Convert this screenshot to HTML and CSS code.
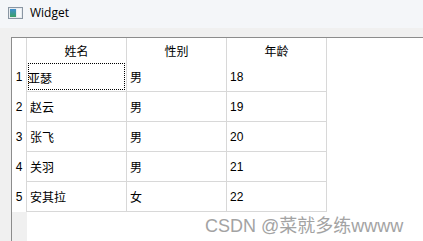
FILE: index.html
```html
<!DOCTYPE html>
<html lang="zh-CN">
<head>
  <meta charset="UTF-8">
  <title>Widget</title>
  <link rel="stylesheet" href="styles.css">
</head>
<body>
  <div class="window">
    <div class="titlebar">
      <svg class="app-icon" width="15" height="12" viewBox="0 0 15 12">
        <defs>
          <linearGradient id="ig" x1="0" y1="0" x2="0" y2="1">
            <stop offset="0" stop-color="#3f8fd0"/>
            <stop offset="1" stop-color="#3aa066"/>
          </linearGradient>
        </defs>
        <rect x="0.5" y="0.5" width="14" height="11" fill="#e8ecf0" stroke="#8a96a3"/>
        <rect x="2" y="2" width="6" height="8" fill="url(#ig)"/>
        <rect x="9" y="2" width="4" height="8" fill="#f7f9fb"/>
      </svg>
      <span class="title">Widget</span>
    </div>
    <div class="client">
      <div class="view">
        <div class="vhead">
          <div class="corner"></div>
          <div class="rownum">1</div>
          <div class="rownum">2</div>
          <div class="rownum">3</div>
          <div class="rownum">4</div>
          <div class="rownum">5</div>
        </div>
        <table class="grid">
          <thead>
            <tr><th>姓名</th><th>性别</th><th>年龄</th></tr>
          </thead>
          <tbody>
            <tr><td><span class="focus">亚瑟</span></td><td>男</td><td>18</td></tr>
            <tr><td>赵云</td><td>男</td><td>19</td></tr>
            <tr><td>张飞</td><td>男</td><td>20</td></tr>
            <tr><td>关羽</td><td>男</td><td>21</td></tr>
            <tr><td>安其拉</td><td>女</td><td>22</td></tr>
          </tbody>
        </table>
        <div class="mark">CSDN @菜就多练wwww</div>
      </div>
    </div>
  </div>
</body>
</html>
```

FILE: styles.css
```css
html, body { margin: 0; height: 100%; }
body {
  font-family: "Noto Sans CJK SC", "Noto Sans", sans-serif;
  font-size: 12px;
  color: #000;
  background: #f0f0f0;
}
.window { display: flex; flex-direction: column; height: 241px; overflow: hidden; }

.titlebar {
  height: 28px;
  display: flex;
  align-items: center;
  padding-left: 8px;
  background: #f4f6f9;
  flex: none;
}
.app-icon { margin-right: 7px; margin-top: -2px; }
.title { font-family: "Open Sans", "Noto Sans", sans-serif; font-size: 12px; margin-top: -3px; }

.client { flex: 1; padding: 9px 0 0 11px; }
.view {
  position: relative;
  height: 100%;
  display: flex;
  align-items: flex-start;
  border-left: 1px solid #8c8c8c;
  border-top: 1px solid #8c8c8c;
  background: #fff;
  box-sizing: border-box;
}

.vhead {
  width: 15px;
  align-self: stretch;
  background: #f0f0f0;
  flex: none;
}
.corner { height: 24px; background: #fff; border-right: 1px solid #d8d8d8; }
.rownum {
  height: 30px;
  line-height: 30px;
  text-align: center;
  background: #fff;
  border-right: 1px solid #d8d8d8;
  font-family: "Liberation Sans", sans-serif;
  font-size: 12px;
}

.grid { border-collapse: collapse; table-layout: fixed; }
.grid th, .grid td {
  width: 99px;
  padding: 0;
  border-right: 1px solid #d8d8d8;
  white-space: nowrap;
}
.grid th {
  height: 24px;
  font-weight: normal;
  text-align: center;
}
.grid td {
  height: 29px;
  padding-left: 3px;
  width: 96px;
  border-bottom: 1px solid #d8d8d8;
  text-align: left;
}
.grid td:nth-child(3) { font-family: "Liberation Sans", sans-serif; }

.focus { display: block; margin: 1px 0 0 -2px; }
.grid tbody tr:first-child td:first-child { position: relative; }
.grid tbody tr:first-child td:first-child::after {
  content: "";
  position: absolute;
  left: 1px; top: 1px; right: 1px; bottom: 1px;
  border: 1px dotted #000;
}

.mark {
  position: absolute;
  left: 193px;
  top: 173px;
  font-family: "Liberation Sans", "Noto Sans CJK SC", sans-serif;
  font-size: 18px;
  color: #a3a3a3;
  white-space: nowrap;
}
```
